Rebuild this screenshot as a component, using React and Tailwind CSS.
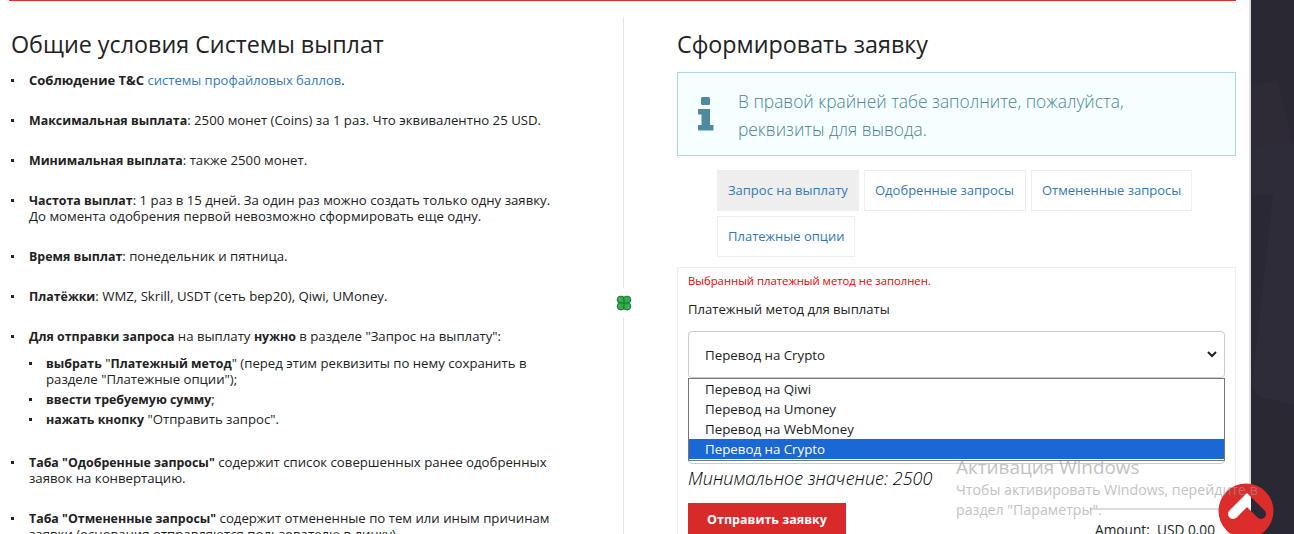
import React from 'react';

const Bullet = ({ children, nested }) => (
    <li className={`relative ${nested ? 'pl-[17px] mb-[4px]' : 'pl-[18px] mb-[24px]'}`}>
        <span className="absolute left-0 top-[7px] w-[3px] h-[3px] bg-[#222]"></span>
        {children}
    </li>
);

const B = ({ children }) => <b className="font-bold text-[12.4px] leading-none">{children}</b>;

const Tab = ({ children, active, width }) => (
    <div className={`${width} h-[41px] pl-[10px] pb-[1px] flex items-center border border-[#eeeeee] text-[#337ab7] text-[13px] ${active ? 'bg-[#eeeeee]' : 'bg-white'}`}>
        {children}
    </div>
);

const Clover = () => (
    <svg width="16" height="16" viewBox="0 0 16 16">
        <g stroke="#1d5a2c" strokeWidth="0.8" fill="#2fae4c">
            <circle cx="5" cy="4.800" r="3.800" />
            <circle cx="11" cy="4.800" r="3.800" />
            <circle cx="5" cy="11.200" r="3.800" />
            <circle cx="11" cy="11.200" r="3.800" />
        </g>
        <rect x="4.500" y="4.500" width="7" height="7" fill="#2fae4c" />
        <path d="M8 4v8M4 8h8" stroke="#136b2c" strokeWidth="0.8" />
        <path d="M3 3.500l1.500 1M12 12l1 1" stroke="#6fe08a" strokeWidth="1" />
    </svg>
);

const ScrollTop = () => (
    <svg width="56" height="56" viewBox="0 0 56 56" className="block">
        <defs>
            <clipPath id="lightSide"><rect x="0" y="0" width="33" height="56" /></clipPath>
            <clipPath id="darkSide"><rect x="33" y="0" width="23" height="56" /></clipPath>
        </defs>
        <circle cx="28" cy="28" r="27.5" fill="#dd2c2c" />
        <polyline points="15,31 29,17 43,31" fill="none" stroke="#ffffff" strokeWidth="10" strokeLinecap="round" clipPath="url(#lightSide)" />
        <polyline points="15,31 29,17 43,31" fill="none" stroke="#2b2935" strokeWidth="10" strokeLinecap="round" clipPath="url(#darkSide)" />
    </svg>
);

export default function App() {
    return (
        <div className="relative h-[534px] w-[1294px] overflow-hidden flex bg-[#2a2833] font-['Open_Sans',sans-serif] text-[13.2px] leading-[16px] text-[#222]">
            <div className="w-[1251px] h-full bg-white border-r-2 border-[#dddddd] shrink-0 pl-[9px] pr-[13px]">
                <div className="border-t border-[#e02b2b] flex pt-[16px] h-full">
                    {/* Left: rules */}
                    <div className="relative w-[615px] border-r border-[#e5e5e5] pl-[2px] shrink-0">
                        <h2 className="text-[23.3px] leading-[30px] font-medium mt-[12px] mb-[13px] text-[#222]">Общие условия Системы выплат</h2>
                        <ul>
                            <Bullet><b className="font-bold text-[13px] leading-none">Соблюдение T&amp;C</b> <span className="text-[#337ab7] text-[13px] leading-none">системы профайловых баллов</span><span className="text-[13px] leading-none">.</span></Bullet>
                            <Bullet><B>Максимальная выплата</B>: 2500 монет (Coins) за 1 раз. Что эквивалентно 25 USD.</Bullet>
                            <Bullet><B>Минимальная выплата</B>: также 2500 монет.</Bullet>
                            <Bullet><B>Частота выплат</B>: 1 раз в 15 дней. За один раз можно создать только одну заявку.<br />До момента одобрения первой невозможно сформировать еще одну.</Bullet>
                            <Bullet><B>Время выплат</B>: понедельник и пятница.</Bullet>
                            <Bullet><B>Платёжки</B>: WMZ, Skrill, USDT (сеть bep20), Qiwi, UMoney.</Bullet>
                            <Bullet>
                                <B>Для отправки запроса</B> на выплату <B>нужно</B> в разделе "Запрос на выплату":
                                <ul className="mt-[11px] mb-[27px]">
                                    <Bullet nested><B>выбрать</B> "<B>Платежный метод</B>" (перед этим реквизиты по нему сохранить в<br />разделе "Платежные опции");</Bullet>
                                    <Bullet nested><B>ввести требуемую сумму</B>;</Bullet>
                                    <Bullet nested><B>нажать кнопку</B> "Отправить запрос".</Bullet>
                                </ul>
                            </Bullet>
                            <Bullet><B>Таба "Одобренные запросы"</B> содержит список совершенных ранее одобренных<br />заявок на конвертацию.</Bullet>
                            <Bullet><B>Таба "Отмененные запросы"</B> содержит отмененные по тем или иным причинам<br />заявки (основания отправляются пользователю в личку).</Bullet>
                        </ul>
                        <div className="absolute right-[-9px] top-[271px] w-[17px] h-[30px] bg-white flex items-center justify-center">
                            <Clover />
                        </div>
                    </div>

                    {/* Right: request form */}
                    <div className="flex-1 pl-[53px]">
                        <h2 className="text-[23.3px] leading-[30px] font-medium mt-[12px] mb-[13px] text-[#222]">Сформировать заявку</h2>
                        <div className="h-[84px] border border-[#a6d9e0] bg-[#f5ffff] flex items-center pl-[20px] text-[#4a8496]">
                            <svg width="16" height="34" viewBox="0 0 16 34" className="shrink-0 mr-[24px]">
                                <rect x="3" y="0" width="9" height="8" rx="1.5" fill="#4f8aa0" />
                                <path d="M0 12h12v16h3.500v5.500H0V28h3.500v-10.500H0z" fill="#4f8aa0" />
                            </svg>
                            <p className="text-[17.35px] leading-[28px] font-light pt-[1px]">В правой крайней табе заполните, пожалуйста,<br />реквизиты для вывода.</p>
                        </div>
                        <div className="flex flex-wrap gap-x-[5px] gap-y-[5px] mt-[14px] pl-[40px] pr-[40px]">
                            <Tab active width="w-[142px]">Запрос на выплату</Tab>
                            <Tab width="w-[162px]">Одобренные запросы</Tab>
                            <Tab width="w-[161px]">Отмененные запросы</Tab>
                            <Tab width="w-[138px]">Платежные опции</Tab>
                        </div>
                        <div className="relative mt-[10px] border border-[#eeeeee] px-[10px] pt-[6px] h-[400px]">
                            <p className="text-[11.3px] leading-[14px] text-[#f00000]">Выбранный платежный метод не заполнен.</p>
                            <p className="mt-[13px] leading-[16px] text-[13.1px]">Платежный метод для выплаты</p>
                            <div className="mt-[14px] h-[47px] border border-[#cccccc] rounded-[4px] flex items-center justify-between pl-[16px] pr-[7px] text-[13.3px]">
                                <span>Перевод на Crypto</span>
                                <svg width="10" height="7" viewBox="0 0 10 7"><path d="M1 1l4 4 4-4" fill="none" stroke="#222" strokeWidth="2" /></svg>
                            </div>
                            <div className="mt-[38px] h-[48px] border border-[#cccccc] rounded-[4px]"></div>
                            <div className="flex justify-between">
                                <div>
                                    <p className="mt-[2px] text-[18px] leading-[24px] italic font-light text-black">Минимальное значение: 2500</p>
                                    <button className="mt-[13px] w-[158px] h-[34px] bg-[#d92a2a] text-white font-bold text-[12.5px]">Отправить заявку</button>
                                </div>
                                <div className="w-[135px] mt-[44px]">
                                    <div className="h-[2px] bg-[#dddddd]"></div>
                                    <p className="mt-[11px] pl-[5px] text-[13.7px] leading-[18px]">Amount:&nbsp; USD 0.00</p>
                                </div>
                            </div>

                            {/* Open select list */}
                            <div className="absolute left-[10px] top-[110px] w-[537px] h-[83px] border border-[#767676] bg-white text-[13.3px]">
                                <div className="h-[20px] pl-[16px] flex items-center">Перевод на Qiwi</div>
                                <div className="h-[20px] pl-[16px] flex items-center">Перевод на Umoney</div>
                                <div className="h-[20px] pl-[16px] flex items-center">Перевод на WebMoney</div>
                                <div className="h-[20px] pl-[16px] flex items-center bg-[#1a68d4] text-white">Перевод на Crypto</div>
                            </div>
                        </div>
                    </div>
                </div>
            </div>

            {/* Dark side background */}
            <svg width="43" height="534" viewBox="0 0 43 534" className="block shrink-0">
                <polygon points="0,87 26,80 41,141 1,146" fill="#2e2b37" />
                <polygon points="22,195 1,384 7,396 43,405 43,146 41,141 1,146 1,195" fill="#2e2c38" />
            </svg>

            <div className="absolute left-[1218px] top-[483px]">
                <ScrollTop />
            </div>

            {/* Windows activation watermark */}
            <div className="absolute left-[956px] top-[456px] text-[#9a9a9a] opacity-60 pointer-events-none">
                <p className="text-[18.900px] leading-[22px]">Активация Windows</p>
                <p className="text-[14.2px] leading-[20px] mt-[2px]">Чтобы активировать Windows, перейдите в<br />раздел "Параметры".</p>
            </div>
        </div>
    );
}
